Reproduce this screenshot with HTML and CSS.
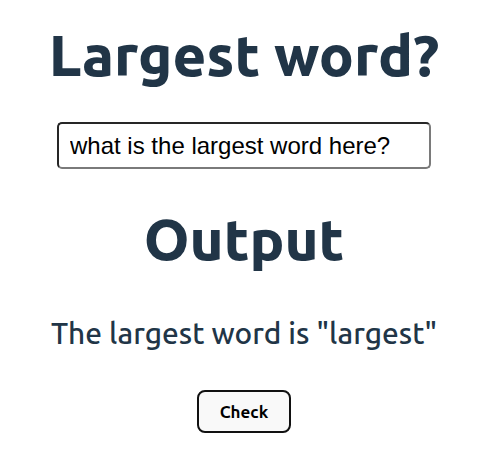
FILE: index.html
```html
<!DOCTYPE html>
<html>
<head>
<meta charset="utf-8">
<link rel="stylesheet" href="styles.css">
</head>
<body>
<main class="app">
  <h1 class="title">Largest word?</h1>
  <input class="field" type="text" value="what is the largest word here?">
  <h1 class="title output">Output</h1>
  <p class="result">The largest word is "largest"</p>
  <button class="check">Check</button>
</main>
</body>
</html>
```
FILE: styles.css
```css
html, body {
  margin: 0;
  padding: 0;
  background: #ffffff;
}
.app {
  display: flex;
  flex-direction: column;
  align-items: center;
  padding-left: 7px;
  font-family: "Ubuntu", "Open Sans", sans-serif;
  color: #213547;
}
.title {
  margin: 20px 0 0;
  font-size: 58px;
  font-weight: 900;
  line-height: 70px;
  letter-spacing: 0;
}
.field {
  margin-top: 32px;
  width: 374px;
  height: 47px;
  box-sizing: border-box;
  border-style: solid;
  border-width: 2px;
  border-color: #262626 #7a7a7a #7a7a7a #262626;
  border-radius: 5px;
  padding: 0 11px;
  font-family: "Liberation Sans", Arial, sans-serif;
  font-size: 24px;
  color: #000;
}
.output {
  margin-top: 35px;
}
.result {
  margin: 39px 0 0;
  font-size: 29.8px;
  font-weight: 500;
  line-height: 40px;
}
.check {
  margin-top: 37px;
  width: 94px;
  height: 43px;
  border: 2px solid #111;
  border-radius: 8px;
  background: #f9f9f9;
  font-family: "Ubuntu", "Open Sans", sans-serif;
  font-weight: 700;
  font-size: 17px;
  color: #000;
  cursor: pointer;
}
```
